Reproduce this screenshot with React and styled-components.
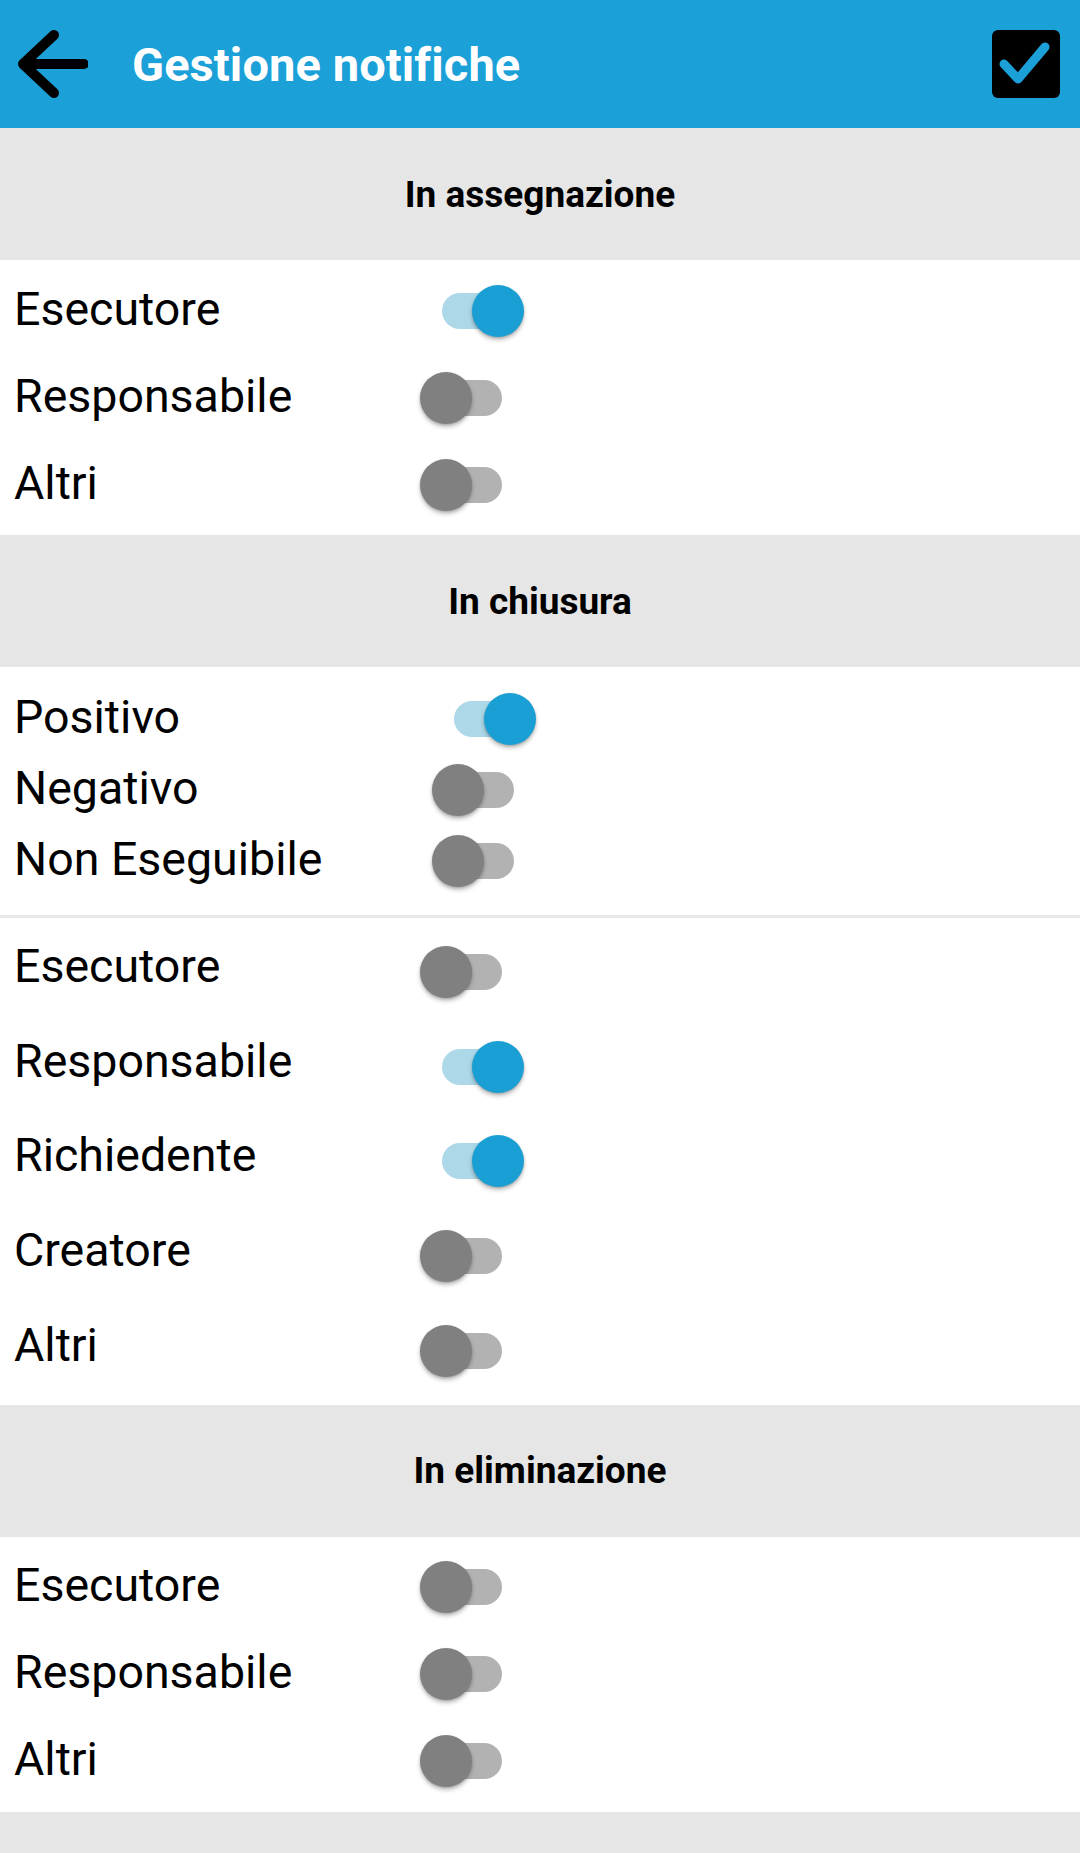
import styled, { createGlobalStyle } from 'styled-components';

const GlobalStyle = createGlobalStyle`
  html, body {
    margin: 0;
    padding: 0;
    background: #ffffff;
    font-family: Roboto, "Noto Sans", sans-serif;
  }
`;

const Page = styled.div`
  width: 1080px;
  height: 1853px;
  overflow: hidden;
  background: #ffffff;
`;

const Toolbar = styled.header`
  height: 128px;
  background: #1ba1d8;
  display: flex;
  align-items: center;
  padding: 0 18px 0 16px;
  box-sizing: border-box;
`;

const BackButton = styled.div`
  width: 72px;
  height: 72px;
  display: flex;
  align-items: center;
  justify-content: center;
`;

const Title = styled.h1`
  margin: 0 0 0 44px;
  flex: 1;
  color: #ffffff;
  font-size: 47px;
  font-weight: 700;
  letter-spacing: 0.1px;
`;

const SaveButton = styled.div`
  width: 72px;
  height: 72px;
  display: flex;
  align-items: center;
  justify-content: center;
`;

const SectionHeader = styled.div`
  height: 132px;
  background: #e6e6e6;
  display: flex;
  align-items: center;
  justify-content: center;
  font-size: 37px;
  font-weight: 700;
  color: #000000;
`;

const Group = styled.div`
  padding: ${(p) => p.$pad || '7px 0 7px'};
  background: #ffffff;
`;

const Divider = styled.div`
  height: 3px;
  background: #e8e8e8;
`;

const Row = styled.div`
  height: ${(p) => p.$height}px;
  display: flex;
  align-items: center;
  padding-left: 14px;
`;

const Label = styled.span`
  width: ${(p) => p.$width}px;
  margin-bottom: ${(p) => p.$raise * 2}px;
  font-size: 46.5px;
  color: #000000;
`;

const SwitchBox = styled.div`
  position: relative;
  width: 104px;
  height: 52px;
  flex-shrink: 0;
`;

const Track = styled.div`
  position: absolute;
  left: 22px;
  top: 8px;
  width: 60px;
  height: 36px;
  border-radius: 18px;
  background: ${(p) => (p.$on ? '#acd8e8' : '#b2b2b2')};
`;

const Thumb = styled.div`
  position: absolute;
  top: 0;
  left: ${(p) => (p.$on ? 52 : 0)}px;
  width: 52px;
  height: 52px;
  border-radius: 50%;
  background: ${(p) => (p.$on ? '#1a9fd4' : '#808080')};
  box-shadow: 0 3px 4px rgba(0, 0, 0, 0.25), 0 1px 2px rgba(0, 0, 0, 0.15);
`;

const Switch = ({ on }) => (
  <SwitchBox>
    <Track $on={on} />
    <Thumb $on={on} />
  </SwitchBox>
);

const ArrowIcon = () => (
  <svg width="72" height="72" viewBox="0 0 72 72">
    <path
      d="M68 36 H8 M38 7 L7 36 L38 65"
      fill="none"
      stroke="#000"
      strokeWidth="10"
      strokeLinecap="round"
      strokeLinejoin="round"
    />
  </svg>
);

const CheckIcon = () => (
  <svg width="72" height="72" viewBox="0 0 72 72">
    <rect x="2" y="2" width="68" height="68" rx="6" fill="#000" />
    <path
      d="M14 36 L28 51 L55 19"
      fill="none"
      stroke="#1ba1d8"
      strokeWidth="9"
      strokeLinecap="round"
      strokeLinejoin="round"
    />
  </svg>
);

const SwitchGroup = ({ items, rowHeight, labelWidth, pad, raise = 2 }) => (
  <Group $pad={pad}>
    {items.map(([label, on]) => (
      <Row key={label} $height={rowHeight}>
        <Label $width={labelWidth} $raise={raise}>
          {label}
        </Label>
        <Switch on={on} />
      </Row>
    ))}
  </Group>
);

export default function App() {
  return (
    <Page>
      <GlobalStyle />
      <Toolbar>
        <BackButton>
          <ArrowIcon />
        </BackButton>
        <Title>Gestione notifiche</Title>
        <SaveButton>
          <CheckIcon />
        </SaveButton>
      </Toolbar>

      <SectionHeader>In assegnazione</SectionHeader>
      <SwitchGroup
        rowHeight={87}
        labelWidth={406}
        items={[
          ['Esecutore', true],
          ['Responsabile', false],
          ['Altri', false],
        ]}
      />

      <SectionHeader>In chiusura</SectionHeader>
      <SwitchGroup
        rowHeight={71}
        labelWidth={418}
        pad="16px 0 19px"
        items={[
          ['Positivo', true],
          ['Negativo', false],
          ['Non Eseguibile', false],
        ]}
      />
      <Divider />
      <SwitchGroup
        rowHeight={94.6}
        labelWidth={406}
        raise={6}
        items={[
          ['Esecutore', false],
          ['Responsabile', true],
          ['Richiedente', true],
          ['Creatore', false],
          ['Altri', false],
        ]}
      />

      <SectionHeader>In eliminazione</SectionHeader>
      <SwitchGroup
        rowHeight={87}
        labelWidth={406}
        items={[
          ['Esecutore', false],
          ['Responsabile', false],
          ['Altri', false],
        ]}
      />
      <SectionHeader />
    </Page>
  );
}
